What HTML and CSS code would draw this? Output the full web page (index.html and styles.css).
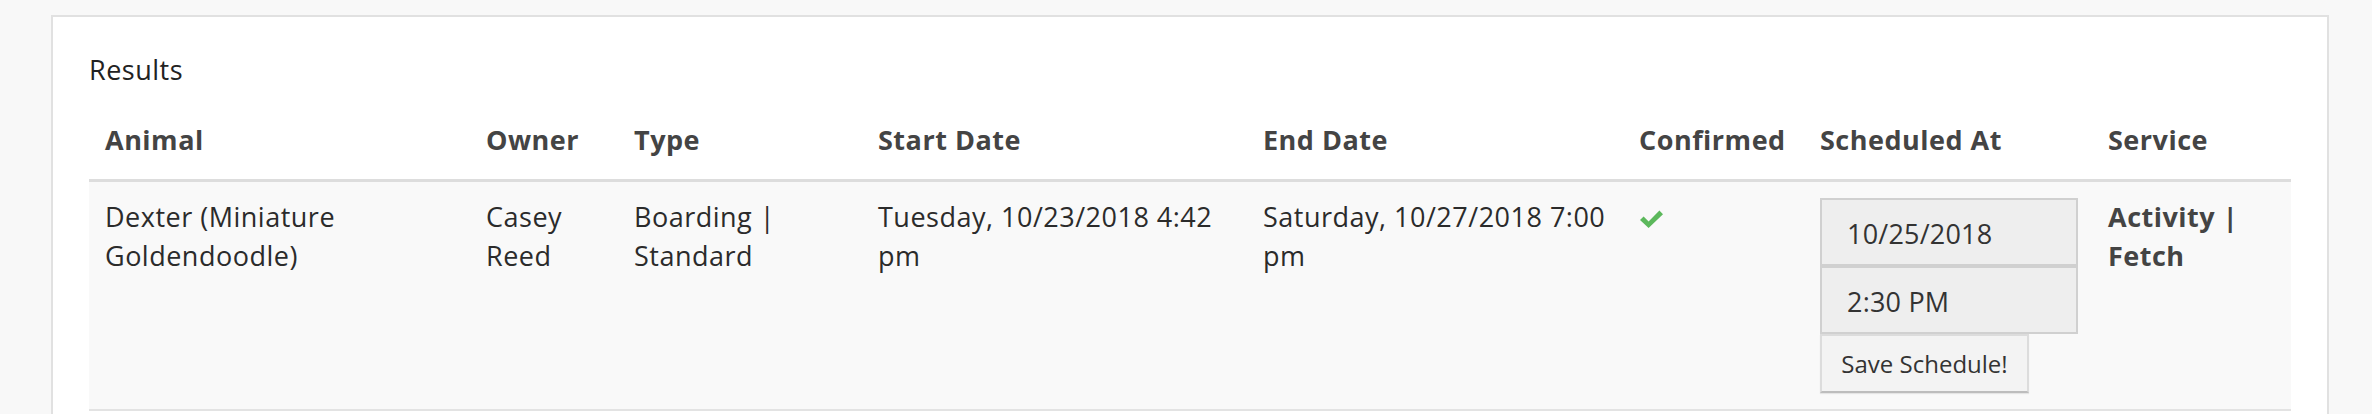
FILE: index.html
```html
<!DOCTYPE html>
<html>
<head>
<meta charset="utf-8">
<title>Results</title>
<link rel="stylesheet" href="styles.css">
</head>
<body>
<div class="card">
  <div class="card-title">Results</div>
  <table class="results">
    <colgroup>
      <col class="c-animal">
      <col class="c-owner">
      <col class="c-type">
      <col class="c-start">
      <col class="c-end">
      <col class="c-confirmed">
      <col class="c-sched">
      <col class="c-service">
    </colgroup>
    <thead>
      <tr>
        <th>Animal</th>
        <th>Owner</th>
        <th>Type</th>
        <th>Start Date</th>
        <th>End Date</th>
        <th>Confirmed</th>
        <th>Scheduled At</th>
        <th>Service</th>
      </tr>
    </thead>
    <tbody>
      <tr>
        <td>Dexter (Miniature Goldendoodle)</td>
        <td>Casey Reed</td>
        <td>Boarding | Standard</td>
        <td>Tuesday, 10/23/2018 4:42 pm</td>
        <td>Saturday, 10/27/2018 7:00 pm</td>
        <td><svg class="check" width="23" height="18" viewBox="0 0 23 18"><path d="M0 10 L3.6 6.4 L8.6 11.4 L19.4 0.6 L23 4.2 L8.6 18 Z" fill="#5cb85c"/></svg></td>
        <td>
          <input class="sched-input" type="text" value="10/25/2018">
          <input class="sched-input" type="text" value="2:30 PM">
          <button class="save-btn" type="button">Save Schedule!</button>
        </td>
        <td class="service">Activity | Fetch</td>
      </tr>
    </tbody>
  </table>
</div>
</body>
</html>
```

FILE: styles.css
```css
html, body {
  margin: 0;
  padding: 0;
}
body {
  background: #f8f8f8;
  font-family: "Open Sans", "Liberation Sans", sans-serif;
  font-size: 27px;
  line-height: 1.42857;
  letter-spacing: 0.5px;
  color: #2b2b2b;
}
.card {
  margin: 15px 0 0 51px;
  width: 2278px;
  box-sizing: border-box;
  background: #fff;
  border: 2px solid #e1e1e1;
  padding: 34px 36px 40px 36px;
}
.card-title {
  color: #222;
  margin-bottom: 16px;
}
.results {
  width: 2202px;
  table-layout: fixed;
  border-collapse: collapse;
  border-spacing: 0;
}
.c-animal { width: 381px; }
.c-owner { width: 148px; }
.c-type { width: 244px; }
.c-start { width: 385px; }
.c-end { width: 376px; }
.c-confirmed { width: 181px; }
.c-sched { width: 288px; }
.c-service { width: 199px; }
.results th {
  text-align: left;
  font-weight: 700;
  color: #444;
  padding: 15px 8px 20px 16px;
  vertical-align: bottom;
  border-bottom: 3px solid #ddd;
}
.results td {
  background: #f9f9f9;
  padding: 16px 8px 16px 16px;
  vertical-align: top;
  border-bottom: 2px solid #e3e3e3;
}
.results td.service {
  font-weight: 700;
  color: #444;
}
.check {
  display: block;
  margin: 12px 0 0 1px;
}
.sched-input {
  display: block;
  width: 258px;
  height: 68px;
  box-sizing: border-box;
  margin: 0;
  border: 2px solid #d0d0d0;
  background: #eeeeee;
  font-family: "Open Sans", "Liberation Sans", sans-serif;
  font-size: 27px;
  letter-spacing: 0.2px;
  color: #333;
  padding: 2px 25px 0 25px;
  outline: none;
}
.save-btn {
  display: block;
  width: 209px;
  height: 59px;
  box-sizing: border-box;
  margin: 0;
  border: 2px solid #dcdcdc;
  border-bottom-color: #bdbdbd;
  background: #f3f3f3;
  font-family: "Open Sans", "Liberation Sans", sans-serif;
  font-size: 24px;
  letter-spacing: 0;
  color: #333;
  padding: 0 10px;
  box-shadow: 0 1px 1px rgba(0,0,0,0.08);
}
```
